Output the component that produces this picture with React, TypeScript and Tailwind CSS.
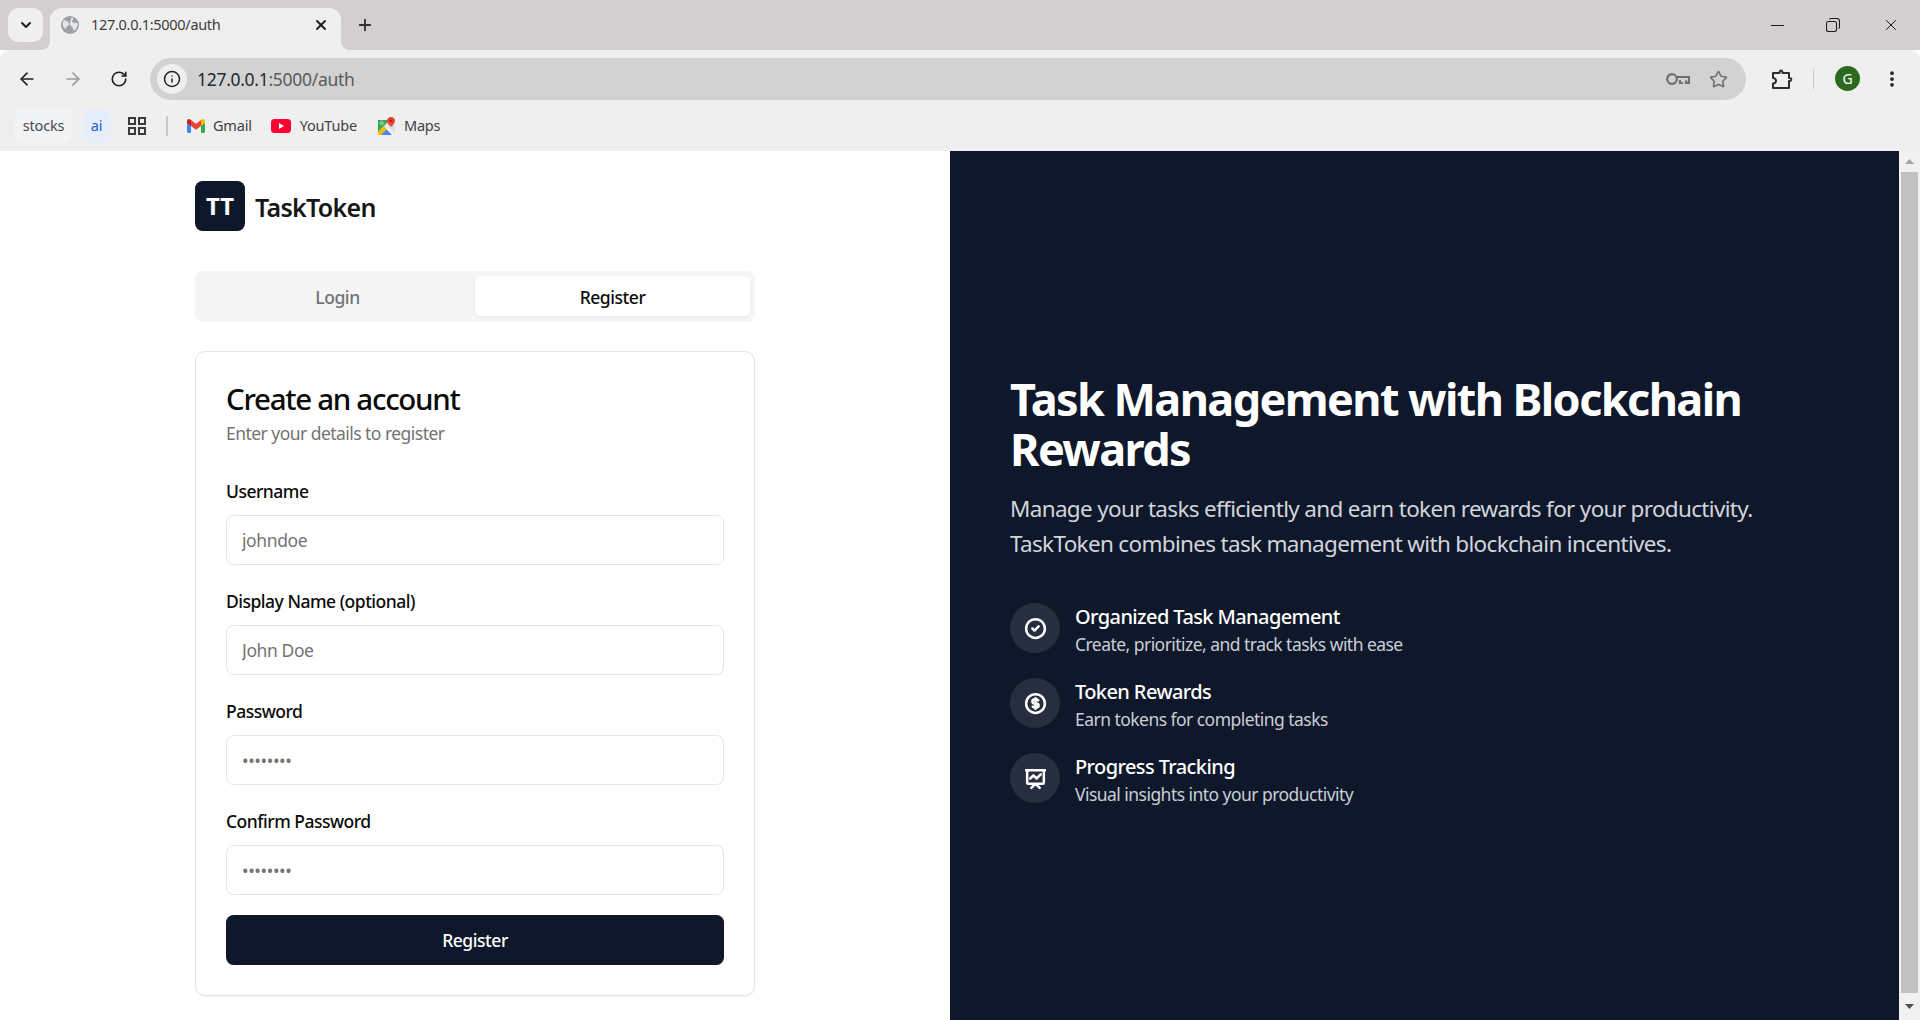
import React from "react";
import { ArrowLeft, ArrowRight, RotateCw, Info, Star, EllipsisVertical, Plus, X, ChevronDown } from "lucide-react";
import { HiOutlineCheckCircle, HiOutlineCurrencyDollar, HiOutlinePresentationChartLine } from "react-icons/hi";

function Globe() {
  return (
    <svg width="18" height="18" viewBox="0 0 18 18">
      <circle cx="9" cy="9" r="9" fill="#9aa0a6" />
      <path d="M3 4c2 0 3 1 4 2s2 2 1 3-3 1-3 3-2 0-3-2 0-5 1-6zM11 1c2 1 1 3 0 4s3 2 5 2 0 6-3 8c-1-2-1-4-3-5s-1-5 1-9z" fill="#e4e5e6" />
    </svg>
  );
}

function Key() {
  return (
    <svg width="24" height="14" viewBox="0 0 24 14" fill="none" stroke="#6f6f6f" strokeWidth="2.200">
      <circle cx="6" cy="7" r="4.800" />
      <path d="M11 5h12v6h-3V8.500M17 11h-3V8" />
    </svg>
  );
}

function PuzzleIcon() {
  return (
    <svg width="22" height="21" viewBox="0 0 22 21" fill="none" stroke="#2f2f2f" strokeWidth="2" strokeLinejoin="round">
      <path d="M2 4h6.500c0-3.500 3-3.500 3 0H18v5c3-.5 3 3.500 0 3v7H2v-4.500c2.500 0 3-1.500 3-2.700S4 9 2 9z" />
    </svg>
  );
}

function Restore() {
  return (
    <svg width="14" height="14" viewBox="0 0 14 14" fill="none" stroke="#1f1f1f" strokeWidth="1.100">
      <rect x="0.500" y="3.500" width="10" height="10" rx="2" />
      <path d="M3.500 1.500c.4-.7 1-1 1.500-1h6c1.500 0 2.500 1 2.500 2.500v6c0 .7-.4 1.300-1 1.500" />
    </svg>
  );
}

function GridIcon() {
  return (
    <svg width="18" height="18" viewBox="0 0 18 18" fill="none" stroke="#3b3b3b" strokeWidth="2">
      <rect x="1" y="1" width="6" height="6" />
      <rect x="11" y="1" width="6" height="6" />
      <rect x="1" y="11" width="6" height="6" />
      <rect x="11" y="11" width="6" height="6" />
    </svg>
  );
}

function Gmail() {
  return (
    <svg width="18" height="14" viewBox="0 0 18 14">
      <path d="M0 3v9.500C0 13.300.7 14 1.500 14H4V6.500z" fill="#4285f4" />
      <path d="M14 6.500V14h2.500c.8 0 1.500-.7 1.500-1.500V3z" fill="#34a853" />
      <path d="M4 1v6l5 3.700L14 7V1L9 4.700z" fill="#ea4335" />
      <path d="M0 2.500V4l4 3V1L2.500.2C1.300-.5 0 .6 0 2.500z" fill="#c5221f" />
      <path d="M14 1v6l4-3V2.500C18 .6 16.700-.5 15.500.2z" fill="#fbbc04" />
    </svg>
  );
}

function YouTube() {
  return (
    <svg width="20" height="14" viewBox="0 0 20 14">
      <rect width="20" height="14" rx="3.500" fill="#ff0033" />
      <path d="M8 4l5 3-5 3z" fill="#fff" />
    </svg>
  );
}

function Maps() {
  return (
    <svg width="18" height="18" viewBox="0 0 18 18">
      <path d="M0 3h12L0 15z" fill="#34a853" />
      <path d="M0 15l6-6 7 9H1.500C.7 18 0 17.300 0 16.500z" fill="#fbbc04" />
      <path d="M3 18l5.500-5.500L14 18z" fill="#4285f4" />
      <path d="M8 7l4-4 5 6v7z" fill="#dadce0" />
      <path d="M3.500 3L7 6.500 3.500 9 1 6z" fill="#7fc28f" />
      <path d="M13 0c-2.500 0-4 1.800-4 3.800C9 6.500 13 10 13 10s4-3.500 4-6.200C17 1.800 15.500 0 13 0z" fill="#ea4335" />
      <circle cx="13" cy="3.800" r="1.400" fill="#a52714" />
    </svg>
  );
}

function Field({ label, placeholder, type = "text" }: { label: string; placeholder: string; type?: string }) {
  return (
    <div className="flex flex-col">
      <label className="h-[25px] flex items-center text-[17.5px] font-medium text-[#0a0a0a] tracking-[-0.5px]">{label}</label>
      <input
        type={type}
        placeholder={placeholder}
        readOnly
        className="mt-[11px] h-[50px] w-full rounded-[7.5px] border border-[#e5e5e5] bg-white px-[15px] text-[17.5px] outline-none placeholder:text-[#737373] tracking-[-0.4px]"
      />
    </div>
  );
}

function Feature({ icon, title, sub }: { icon: React.ReactNode; title: string; sub: string }) {
  return (
    <div className="h-[55px] flex items-center gap-[15px]">
      <div className="w-[50px] h-[50px] rounded-full bg-[#272e3f] flex items-center justify-center text-white [&_path]:stroke-[2.400]">{icon}</div>
      <div className="h-[55px] flex flex-col pt-[1px]">
        <div className="text-[20px] leading-[30px] font-medium text-white tracking-[-0.6px]">{title}</div>
        <div className="text-[17.5px] leading-[25px] text-[#c9ced6] tracking-[-0.54px]">{sub}</div>
      </div>
    </div>
  );
}

export default function App() {
  return (
    <div className="w-[1920px] h-[1020px] overflow-hidden flex flex-col bg-white font-['Noto_Sans',sans-serif]">
      {/* tab strip */}
      <div className="h-[50px] bg-[#d3cfd1] flex items-end shrink-0 pl-[8px]">
        <div className="w-[35px] h-[34px] mb-[8px] rounded-[10px] bg-[#efefef] flex items-center justify-center">
          <ChevronDown size={16} strokeWidth={3} color="#222" />
        </div>
        <div className="relative ml-[7px] w-[291px] h-[42px] rounded-t-[12px] bg-[#efefef] flex items-center pl-[11px] pr-[12px] pb-[8px]">
          <svg className="absolute left-[-9px] bottom-0" width="9" height="9" viewBox="0 0 9 9"><path d="M9 0v9H0c5 0 9-4 9-9z" fill="#efefef" /></svg>
          <svg className="absolute right-[-9px] bottom-0" width="9" height="9" viewBox="0 0 9 9"><path d="M0 0v9h9C4 9 0 5 0 0z" fill="#efefef" /></svg>
          <Globe />
          <span className="ml-[12px] flex-1 text-[14.5px] text-[#3c3c3c] tracking-[-0.3px]">127.0.0.1:5000/auth</span>
          <X size={16} strokeWidth={3} color="#222" />
        </div>
        <div className="ml-[15px] mb-[16px] w-[18px] h-[18px] flex items-center justify-center">
          <Plus size={18} strokeWidth={2.500} color="#333" />
        </div>
        <div className="ml-auto flex h-[50px] items-center">
          <div className="w-[56px] flex justify-center"><div className="w-[13px] h-[1px] bg-[#1f1f1f]" /></div>
          <div className="w-[56px] flex justify-center"><Restore /></div>
          <div className="w-[59px] flex justify-center"><X size={18} strokeWidth={1.300} color="#111" /></div>
        </div>
      </div>
      {/* toolbar */}
      <div className="h-[50px] bg-[#efefef] rounded-t-[10px] flex items-center shrink-0 pl-[4px] pt-[8px]">
        <div className="w-[46px] flex justify-center"><ArrowLeft size={20} strokeWidth={2} color="#222" /></div>
        <div className="w-[46px] flex justify-center"><ArrowRight size={20} strokeWidth={2} color="#9a9a9a" /></div>
        <div className="w-[46px] flex justify-center"><RotateCw size={18} strokeWidth={2.200} color="#222" /></div>
        <div className="ml-[8px] h-[42px] w-[1596px] rounded-full bg-[#d2d2d2] flex items-center pl-[7px] pr-[18px]">
          <div className="w-[30px] h-[30px] rounded-full bg-[#efefef] flex items-center justify-center">
            <Info size={18} strokeWidth={2} color="#222" />
          </div>
          <span className="ml-[10px] text-[17.5px] tracking-[-0.3px] text-[#1f2a37]">127.0.0.1<span className="text-[#5a5a5a]">:5000/auth</span></span>
          <div className="ml-auto flex items-center gap-[19px]">
            <Key />
            <Star size={19} strokeWidth={2} color="#6f6f6f" />
          </div>
        </div>
        <div className="ml-[25px] w-[22px] flex justify-center"><PuzzleIcon /></div>
        <div className="ml-[20px] w-[1px] h-[20px] bg-[#c9c9c9]" />
        <div className="ml-[21px] mb-[2px] w-[25px] h-[25px] rounded-full bg-[#2d6a1f] flex items-center justify-center text-white text-[14px]">G</div>
        <div className="ml-[20px] w-[24px] flex justify-center"><EllipsisVertical size={20} strokeWidth={2.500} color="#222" /></div>
      </div>
      {/* bookmarks */}
      <div className="h-[51px] bg-[#efefef] flex items-center shrink-0 pl-[15px] text-[14.5px] text-[#3f3f3f] tracking-[-0.2px]">
        <div className="w-[57px] h-[34px] rounded-[8px] bg-[#f1f3f5] flex items-center justify-center text-[#4a4a4a]">stocks</div>
        <div className="ml-[11px] w-[27px] h-[34px] rounded-[8px] bg-[#e6eefc] flex items-center justify-center text-[#1a5ec9]">ai</div>
        <div className="ml-[18px]"><GridIcon /></div>
        <div className="ml-[20px] w-[2px] h-[20px] bg-[#c9c9c9]" />
        <div className="ml-[19px]"><Gmail /></div>
        <span className="ml-[8px]">Gmail</span>
        <div className="ml-[19px]"><YouTube /></div>
        <span className="ml-[9px]">YouTube</span>
        <div className="ml-[21px]"><Maps /></div>
        <span className="ml-[8px]">Maps</span>
      </div>
      {/* page */}
      <div className="flex-1 flex min-h-0 overflow-hidden">
        <div className="w-[1899px] h-[875px] shrink-0 flex">
          <div className="flex-1 flex justify-center py-[30px]">
            <div className="w-[560px] flex flex-col">
              <div className="flex items-center gap-[10px] h-[50px]">
                <div className="w-[50px] h-[50px] rounded-[7.5px] bg-[#0f172a] flex items-center justify-center text-white text-[24px] font-bold leading-none">TT</div>
                <div className="text-[25px] font-semibold text-[#171717] tracking-[-0.7px] mt-[3px]">TaskToken</div>
              </div>
              <div className="mt-[40px] h-[50px] rounded-[7.5px] bg-[#f5f5f5] p-[5px] flex shadow-[0_1px_2px_rgba(0,0,0,0.03)]">
                <div className="flex-1 flex items-center justify-center text-[17.5px] font-medium text-[#737373] tracking-[-0.45px] pt-[2px]">Login</div>
                <div className="flex-1 flex items-center justify-center rounded-[5px] bg-white text-[17.5px] font-medium text-[#0a0a0a] tracking-[-0.45px] pt-[2px] shadow-[0_1px_3px_rgba(0,0,0,0.08)]">Register</div>
              </div>
              <div className="mt-[30px] flex-1 rounded-[10px] border border-[#e5e5e5] bg-white shadow-[0_1px_2px_rgba(0,0,0,0.05)] p-[30px] flex flex-col">
                <div className="text-[29.5px] leading-[30px] font-medium text-[#0a0a0a] tracking-[-1.3px] mt-[2px]">Create an account</div>
                <div className="mt-[7px] text-[17.5px] leading-[25px] text-[#737373] tracking-[-0.54px]">Enter your details to register</div>
                <div className="mt-[33px] flex flex-col gap-[24px]">
                  <Field label="Username" placeholder="johndoe" />
                  <Field label="Display Name (optional)" placeholder="John Doe" />
                  <Field label="Password" placeholder="••••••••" type="password" />
                  <Field label="Confirm Password" placeholder="••••••••" type="password" />
                </div>
                <div className="mt-[20px] h-[50px] rounded-[7.5px] bg-[#0f172a] flex items-center justify-center text-white text-[17.5px] font-medium tracking-[-0.45px]">Register</div>
              </div>
            </div>
          </div>
          <div className="w-[949px] shrink-0 bg-[#0f172a] px-[60px] pt-[2px] flex flex-col justify-center">
            <h1 className="text-[45px] leading-[50px] font-bold text-white tracking-[-1.6px]">Task Management with Blockchain Rewards</h1>
            <p className="mt-[17px] text-[22.5px] leading-[35px] text-[#d1d5db] tracking-[-0.68px]">Manage your tasks efficiently and earn token rewards for your productivity. TaskToken combines task management with blockchain incentives.</p>
            <div className="mt-[40px] flex flex-col gap-[20px]">
              <Feature icon={<HiOutlineCheckCircle size={25} />} title="Organized Task Management" sub="Create, prioritize, and track tasks with ease" />
              <Feature icon={<HiOutlineCurrencyDollar size={25} />} title="Token Rewards" sub="Earn tokens for completing tasks" />
              <Feature icon={<HiOutlinePresentationChartLine size={25} />} title="Progress Tracking" sub="Visual insights into your productivity" />
            </div>
          </div>
        </div>
        {/* scrollbar */}
        <div className="w-[21px] h-[869px] shrink-0 bg-[#f1f1f1] flex flex-col items-center">
          <div className="h-[21px] flex items-center justify-center">
            <svg width="9" height="5" viewBox="0 0 9 5"><path d="M4.500 0L9 5H0z" fill="#a3a3a3" /></svg>
          </div>
          <div className="w-[17px] h-[821px] bg-[#c1c1c1]" />
          <div className="flex-1 flex items-center justify-center">
            <svg width="9" height="5" viewBox="0 0 9 5"><path d="M0 0h9L4.500 5z" fill="#505050" /></svg>
          </div>
        </div>
      </div>
    </div>
  );
}
